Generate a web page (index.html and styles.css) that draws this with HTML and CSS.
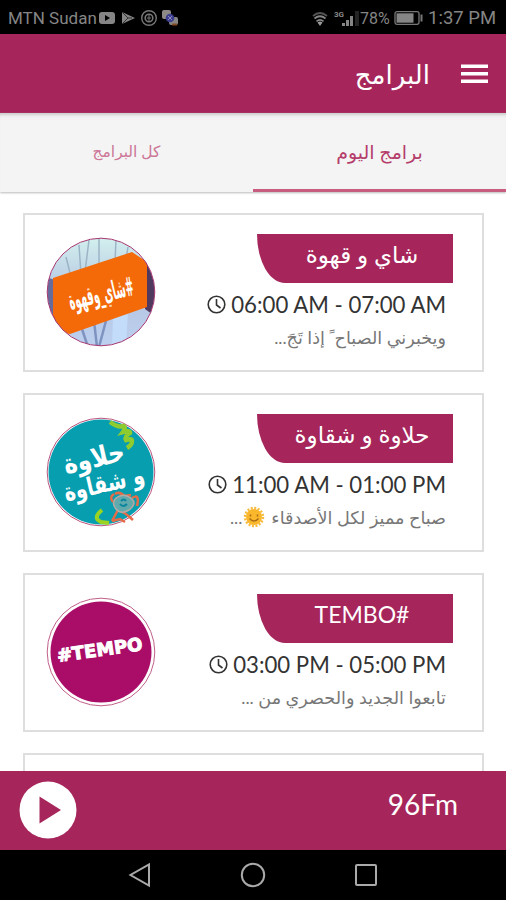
FILE: index.html
```
<!DOCTYPE html>
<html lang="ar">
  <head>
    <meta charset="UTF-8" />
    <meta name="viewport" content="width=device-width, initial-scale=1.0" />
    <title>البرامج</title>
    <link rel="stylesheet" href="styles.css">
  </head>
  <body>
    <div id="app">
      <div id="status-bar">
        <span class="carrier">MTN Sudan</span>
        <svg class="notifications" width="82" height="18" viewBox="0 0 82 18">
          <rect x="0" y="3" width="16" height="12" rx="3" fill="#858585" />
          <path d="M6 6l5 3-5 3z" fill="#000" />
          <path d="M23 3l13 6-13 6z" fill="#858585" />
          <path d="M23 3l6 6-6 6M29 9h4" fill="none" stroke="#333" />
          <circle cx="50" cy="9" r="7.3" fill="none" stroke="#777" stroke-width="1.4" />
          <circle cx="50" cy="9" r="3.8" fill="none" stroke="#777" stroke-width="1.6" />
          <path d="M50 6v6M48 9h4" stroke="#777" />
          <rect x="63" y="1" width="9" height="9" rx="2" fill="#8d8a86" />
          <rect x="70" y="8" width="9" height="8" rx="2" fill="#858585" />
          <circle cx="71" cy="9" r="4.3" fill="#3c3d8c" />
          <path d="M69 7l4 4M73 7l-4 4" stroke="#8a8ac0" />
          <path d="M73 15.500h5" stroke="#874a25" stroke-width="2" />
        </svg>
        <span class="spacer"></span>
        <svg class="signal" width="48" height="18" viewBox="0 0 48 18">
          <g fill="none" stroke="#888" stroke-width="1.700">
            <path d="M1 7q7-6 14 0" stroke="#555" />
            <path d="M2.500 9.500q5.500-4.500 11 0M4.500 12.300q3.500-3 7 0" />
          </g>
          <path d="M5.500 13.500q2.500-2 5 0L8 17z" fill="#999" />
          <text x="22" y="8" class="network">3G</text>
          <path d="M30 14h3v3h-3zM34 11h3v6h-3zM38 7h3v10h-3z" fill="#858585" />
          <path d="M43 2h4v15h-4z" fill="#242424" />
        </svg>
        <span class="percent">78%</span>
        <svg class="battery" width="30" height="14" viewBox="0 0 30 14">
          <rect x="1" y=".7" width="24" height="12.600" rx="2" fill="none" stroke="#777" stroke-width="1.300" />
          <rect x="2.500" y="2.300" width="17" height="9.400" fill="#858585" />
          <path d="M27.500 3.500v7" stroke="#777" stroke-width="2" />
        </svg>
        <span class="clock">1:37 PM</span>
      </div>

      <div id="header">
        <h1>البرامج</h1>
        <svg class="menu" width="27" height="20" viewBox="0 0 27 20">
          <path d="M0 2.300h27M0 9.800h27M0 17.300h27" stroke="#fff" stroke-width="3.600" />
        </svg>
      </div>

      <div id="tabs">
        <div class="tab">كل البرامج</div>
        <div class="tab active">برامج اليوم</div>
      </div>

      <div id="programs">
        <div class="card">
          <svg class="logo" width="110" height="110" viewBox="0 0 110 110">
            <defs>
              <clipPath id="disc"><circle cx="55" cy="55" r="53.500" /></clipPath>
              <linearGradient id="cloth" x2="0" y2="1">
                <stop offset="0" stop-color="#d3f0ee" />
                <stop offset=".5" stop-color="#b4c5e2" />
                <stop offset="1" stop-color="#bdd0ef" />
              </linearGradient>
            </defs>
            <g clip-path="url(#disc)">
              <rect width="110" height="110" fill="url(#cloth)" />
              <path d="M20 20l5 20M33 8l2 30M43 3l-4 32M53 0v32M70 2l-1 24M82 10l-2 12" stroke="#9bb5c6" stroke-width="1.500" fill="none" />
              <path d="M0 40l9 3v37l11 20-20 5z" fill="#666b9b" />
              <path d="M99 20h11v60l-11-8z" fill="#50395f" />
              <path d="M48 84l3 26M61 80l-8 30M80 77l-3 30M36 92l6 18" stroke="#7f93c0" stroke-width="2.500" fill="none" />
              <path d="M67 79l15-4-2 33-14 2z" fill="#c2dcfa" />
              <path d="M7 41l79-26 15 10v45L24 97 7 94z" fill="#f46a08" />
            </g>
            <text class="tea-text" transform="translate(57 65) rotate(-13) scale(1 2)" text-anchor="middle" textLength="66" lengthAdjust="spacingAndGlyphs" direction="rtl">#شاي_وقهوة</text>
            <circle cx="55" cy="55" r="53.800" fill="none" stroke="#a73670" stroke-width="1" />
          </svg>
          <div class="info">
            <div class="name">شاي و قهوة</div>
            <div class="time">
              <span dir="ltr">06:00 AM - 07:00 AM</span>
              <svg width="19" height="19" viewBox="0 0 19 19"><circle cx="9.500" cy="9.500" r="8.300" /><path d="M9.500 4v6l4 3" /></svg>
            </div>
            <div class="description">ويخبرني الصباح ً إذا تَجَ...</div>
          </div>
        </div>

        <div class="card">
          <svg class="logo" width="110" height="110" viewBox="0 0 110 110">
            <circle cx="55" cy="55" r="53.800" fill="#fff" stroke="#ba527d" />
            <circle cx="55" cy="55" r="52.500" fill="#079eaf" />
            <path d="M64 5q8 6 14 4 2 2-1 6 7-2 7 1-6 4-4 7 6-2 6 1 0 4-5 7" fill="none" stroke="#8ecb2f" stroke-width="4.500" />
            <path d="M56 93q-10 8-1 12l8 1" fill="none" stroke="#9bd323" stroke-width="4" />
            <g class="sweet-text">
              <text transform="translate(50 50) rotate(-13) scale(1 1.300)" text-anchor="middle" textLength="62" lengthAdjust="spacingAndGlyphs" direction="rtl">حلاوة</text>
              <text transform="translate(60 75) rotate(-13) scale(1 1.200)" text-anchor="middle" textLength="82" lengthAdjust="spacingAndGlyphs" direction="rtl">و شقاوة</text>
            </g>
            <path d="M68 77q-5 3-1 8M86 81q8-5 5 8M69 77q5-3 9 2l7-1M66 104l6-11 8 4 7 6M66 104l8-2 5 3" fill="none" stroke="#e56c47" stroke-width="2.500" />
            <path d="M70 81q8-6 16 1 5 5-3 11-8 5-13-1-5-6 0-11z" fill="#60a9ad" stroke="#b6aaa5" stroke-width="1.500" />
            <path d="M75 84q3-3 5 0M81 87q-4 4-7 0" fill="none" stroke="#08849d" stroke-width="2" />
          </svg>
          <div class="info">
            <div class="name">حلاوة و شقاوة</div>
            <div class="time">
              <span dir="ltr">11:00 AM - 01:00 PM</span>
              <svg width="19" height="19" viewBox="0 0 19 19"><circle cx="9.500" cy="9.500" r="8.300" /><path d="M9.500 4v6l4 3" /></svg>
            </div>
            <div class="description">
              <span>صباح مميز لكل الأصدقاء</span>
              <svg class="sun" width="22" height="22" viewBox="0 0 22 22">
                <circle cx="11" cy="11" r="9" fill="none" stroke="#f7ba3d" stroke-width="2.500" stroke-dasharray="2 1.530" />
                <circle cx="11" cy="11" r="8" fill="#fbb72b" />
                <path d="M7.500 8.500v2M14.500 8.500v2M6.500 12.500q4.500 5 9 0" fill="none" stroke="#a86b16" stroke-width="1.500" />
              </svg>
              <span>...</span>
            </div>
          </div>
        </div>

        <div class="card">
          <svg class="logo" width="110" height="110" viewBox="0 0 110 110">
            <circle cx="55" cy="55" r="53.800" fill="#fff" stroke="#c05f89" />
            <circle cx="55" cy="55" r="50.500" fill="#aa0d68" />
            <text class="tempo-text" transform="translate(54.500 59) rotate(-8)" text-anchor="middle" textLength="86" lengthAdjust="spacingAndGlyphs">#TEMPO</text>
          </svg>
          <div class="info">
            <div class="name">#TEMBO</div>
            <div class="time">
              <span dir="ltr">03:00 PM - 05:00 PM</span>
              <svg width="19" height="19" viewBox="0 0 19 19"><circle cx="9.500" cy="9.500" r="8.300" /><path d="M9.500 4v6l4 3" /></svg>
            </div>
            <div class="description">تابعوا الجديد والحصري من ...</div>
          </div>
        </div>

        <div class="card"></div>
      </div>

      <div id="player">
        <svg class="play" width="58" height="58" viewBox="0 0 58 58">
          <circle cx="29" cy="29" r="28.500" fill="#fff" />
          <path d="M20.500 15.500v27L42 29z" fill="#a6265b" />
        </svg>
        <span class="station">96Fm</span>
      </div>

      <div id="nav-bar">
        <svg width="24" height="26" viewBox="0 0 24 26"><path d="M21 2.500v21L2.500 13z" /></svg>
        <svg width="26" height="26" viewBox="0 0 26 26"><circle cx="13" cy="13" r="11.200" /></svg>
        <svg width="24" height="24" viewBox="0 0 24 24"><rect x="2" y="2" width="20" height="20" rx="1" /></svg>
      </div>
    </div>
  </body>
</html>
```
FILE: styles.css
```
* {
  box-sizing: border-box;
}
body {
  margin: 0;
  font-family: Lato, "DejaVu Sans", sans-serif;
}
svg {
  display: block;
  flex: none;
}
#app {
  display: flex;
  flex-direction: column;
  height: 900px;
  width: 506px;
  overflow: hidden;
  background-color: #fff;
}
#status-bar {
  display: flex;
  align-items: center;
  height: 34px;
  flex: none;
  padding: 2px 12px 0 8px;
  background-color: #000;
  color: #858585;
  font-family: Roboto, sans-serif;
  font-size: 17px;
  white-space: nowrap;
}
.carrier {
  width: 91px;
}
.spacer {
  flex: 1;
}
.network {
  font-size: 8px;
  font-weight: bold;
  fill: #888;
}
.percent {
  font-size: 16px;
  width: 34px;
}
.battery {
  margin-right: 4px;
}
.clock {
  font-size: 18.5px;
  width: 66px;
}
#header {
  display: flex;
  align-items: center;
  justify-content: flex-end;
  gap: 31px;
  height: 79px;
  flex: none;
  padding-right: 18px;
  background-color: #a6265b;
  color: #fff;
}
#header h1 {
  margin: 0;
  font-size: 26px;
  font-weight: normal;
  line-height: 40px;
}
#tabs {
  display: flex;
  height: 79px;
  flex: none;
  background-color: #f4f4f4;
  box-shadow: inset 0 4px 3px -2px #ccc, 0 1px 2px #bbb;
}
.tab {
  flex: 1;
  display: flex;
  align-items: center;
  justify-content: center;
  border-bottom: 3px solid transparent;
  color: #cc7797;
  font-size: 15.5px;
}
.tab.active {
  border-bottom-color: #c85e7f;
  color: #b53d6b;
  font-size: 19px;
}
#programs {
  flex: 1;
  min-height: 0;
  display: flex;
  flex-direction: column;
  gap: 21px;
  padding: 21px 22px 0 23px;
  overflow: hidden;
}
.card {
  display: flex;
  justify-content: space-between;
  height: 159px;
  flex: none;
  padding: 19px 29px 0 21px;
  border: 2px solid #dedede;
}
.logo {
  margin-top: 3px;
}
.tea-text {
  fill: #fff;
  font-family: "DejaVu Sans", sans-serif;
  font-size: 13px;
  font-weight: bold;
}
.sweet-text {
  fill: #fff;
  font-family: "DejaVu Sans", sans-serif;
  font-size: 21px;
  font-weight: bold;
}
.tempo-text {
  fill: #fff;
  font-family: "DejaVu Sans", sans-serif;
  font-size: 18px;
  font-weight: bold;
  stroke: #fff;
  stroke-width: 1px;
}
.info {
  direction: rtl;
  width: 240px;
}
.name {
  width: 196px;
  height: 49px;
  padding-left: 14px;
  border-bottom-left-radius: 28px 49px;
  background-color: #a6265b;
  color: #fff;
  font-size: 23px;
  line-height: 41px;
  text-align: center;
}
.time {
  display: flex;
  align-items: center;
  gap: 5px;
  height: 42px;
  padding-right: 7px;
  color: #333;
  font-size: 22.2px;
  white-space: nowrap;
}
.time svg {
  fill: none;
  stroke: #333;
  stroke-width: 1.6px;
}
.description {
  display: flex;
  align-items: center;
  height: 24px;
  padding-right: 7px;
  color: #777;
  font-size: 17.6px;
  white-space: nowrap;
}
.sun {
  margin: 0 6px 0 1px;
}
#player {
  display: flex;
  justify-content: space-between;
  height: 79px;
  flex: none;
  padding: 10px 48px 0 19px;
  background-color: #a6265b;
  color: #fff;
}
.station {
  font-size: 28px;
  line-height: 46px;
}
#nav-bar {
  display: flex;
  align-items: center;
  justify-content: center;
  gap: 88px;
  height: 50px;
  flex: none;
  background-color: #000;
}
#nav-bar svg {
  fill: none;
  stroke: #aaa;
  stroke-width: 2px;
}
```
